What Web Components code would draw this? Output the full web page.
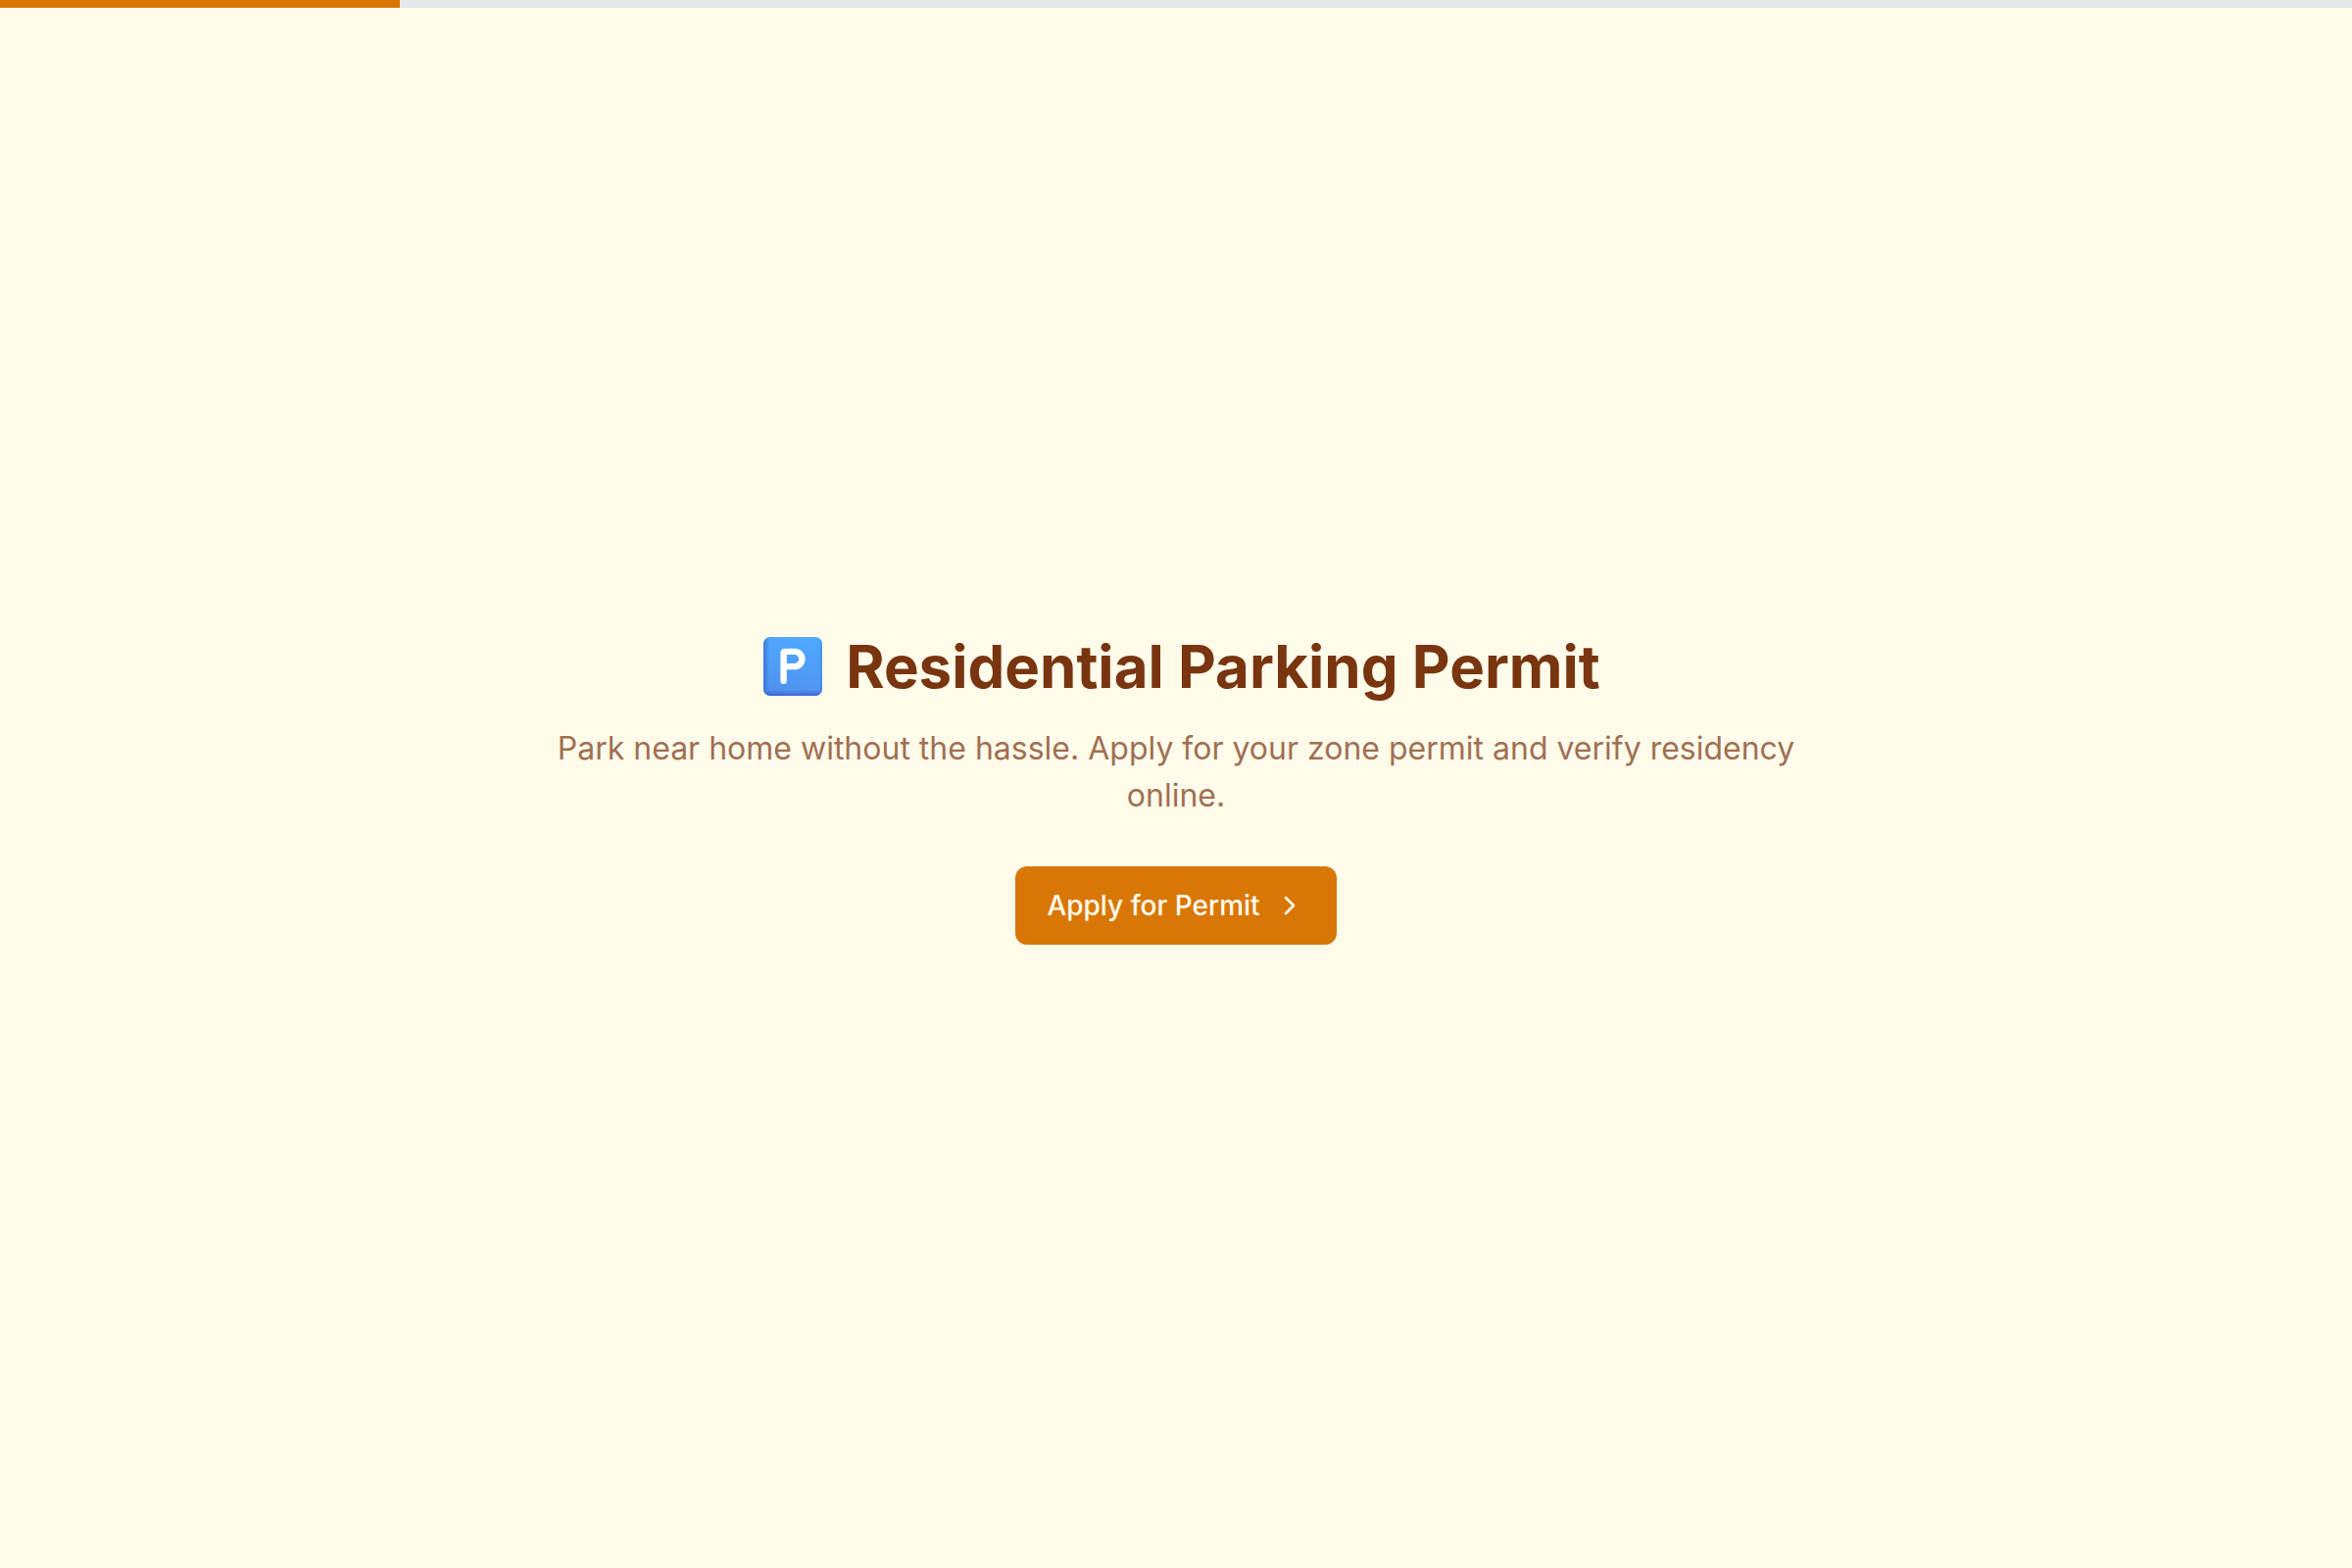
<!DOCTYPE html>
<html lang="en">
<head>
<meta charset="utf-8">
<meta name="viewport" content="width=device-width, initial-scale=1">
<title>Residential Parking Permit</title>
<style>
html, body { height: 100%; margin: 0; }
body { background: #fffbeb; color: #78350f; font-family: Inter, "Liberation Sans", sans-serif; }
</style>
</head>
<body>
<permit-page></permit-page>

<template id="page-template">
<style>
:host { display: flex; flex-direction: column; min-height: 100%; }
main { flex: 1; display: flex; align-items: center; justify-content: center; padding: 32px; }
step-progress { width: 100%; margin-bottom: -8px; }
</style>
<step-progress value="17"></step-progress>
<main>
  <welcome-panel>
    <parking-icon slot="icon"></parking-icon>
    <span slot="title">Residential Parking Permit</span>
    <span slot="description">Park near home without the hassle. Apply for your zone permit and verify residency online.</span>
    <next-button slot="action">Apply for Permit</next-button>
  </welcome-panel>
</main>
</template>

<template id="progress-template">
<style>
:host { display: block; height: 8px; background: #e5e7eb; }
.bar { height: 100%; background: #d97706; }
</style>
<div class="bar"></div>
</template>

<template id="welcome-template">
<style>
:host { display: flex; flex-direction: column; align-items: center; max-width: 1280px; text-align: center; }
h1 { display: flex; align-items: center; gap: 24px; margin: 0 0 16px; padding-left: 12px; font-size: 60px; line-height: 88px; font-weight: 700; }
p { margin: 0 0 48px; font-size: 32px; line-height: 48px; opacity: 0.7; }
</style>
<h1><slot name="icon"></slot><slot name="title"></slot></h1>
<p><slot name="description"></slot></p>
<slot name="action"></slot>
</template>

<template id="parking-template">
<style>
:host { display: block; width: 60px; height: 60px; }
svg { display: block; width: 100%; height: 100%; }
</style>
<svg viewBox="0 0 60 60" role="img" aria-label="Parking">
  <defs>
    <linearGradient id="face" x1="0.6" y1="0" x2="0.45" y2="1">
      <stop offset="0" stop-color="#4fa8ff"/>
      <stop offset="0.5" stop-color="#4f9ef8"/>
      <stop offset="1" stop-color="#5090ee"/>
    </linearGradient>
    <linearGradient id="left">
      <stop offset="0" stop-color="#2f67c8" stop-opacity="0.7"/>
      <stop offset="1" stop-color="#2f67c8" stop-opacity="0"/>
    </linearGradient>
    <linearGradient id="bottom" x1="0" y1="1" x2="0" y2="0">
      <stop offset="0" stop-color="#3a5fd0" stop-opacity="0.85"/>
      <stop offset="1" stop-color="#3a5fd0" stop-opacity="0"/>
    </linearGradient>
    <linearGradient id="right" x1="1" y1="0" x2="0" y2="0">
      <stop offset="0" stop-color="#3a7be0" stop-opacity="0.4"/>
      <stop offset="1" stop-color="#3a7be0" stop-opacity="0"/>
    </linearGradient>
    <clipPath id="tile"><rect width="60" height="60" rx="7"/></clipPath>
  </defs>
  <g clip-path="url(#tile)">
    <rect width="60" height="60" fill="url(#face)"/>
    <rect width="6" height="60" fill="url(#left)"/>
    <rect x="56" width="4" height="60" fill="url(#right)"/>
    <rect y="54" width="60" height="6" fill="url(#bottom)"/>
  </g>
  <path d="M20.6 44.4V16.2Q20.6 14.5 22.3 14.5H31.8A7.6 7.6 0 0 1 31.8 29.7H20.6" transform="translate(0 .4)" fill="none" stroke="#fff" stroke-width="6.4" stroke-linecap="round" stroke-linejoin="round"/>
</svg>
</template>

<template id="button-template">
<style>
:host { display: inline-block; }
button { display: flex; align-items: center; gap: 14px; height: 80px; padding: 0 32px; border: 0; border-radius: 12px; background: #d97706; color: #fffbeb; font: 500 28px/40px Inter, "Liberation Sans", sans-serif; cursor: pointer; }
button:hover { background: #b45309; }
svg { width: 32px; height: 32px; }
</style>
<button type="button"><slot></slot><svg viewBox="0 0 24 24" fill="none" stroke="currentColor" stroke-width="2" stroke-linecap="round" stroke-linejoin="round" aria-hidden="true"><path d="m9 18 6-6-6-6"/></svg></button>
</template>

<script>
class TemplateElement extends HTMLElement {
  constructor() {
    super();
    const template = document.getElementById(this.constructor.template);
    this.attachShadow({ mode: "open" }).append(template.content.cloneNode(true));
  }
}
class ParkingIcon extends TemplateElement { static template = "parking-template"; }
class NextButton extends TemplateElement { static template = "button-template"; }
class WelcomePanel extends TemplateElement { static template = "welcome-template"; }
class StepProgress extends TemplateElement {
  static template = "progress-template";
  connectedCallback() {
    const value = this.getAttribute("value") || "0";
    this.setAttribute("role", "progressbar");
    this.setAttribute("aria-label", "Application progress");
    this.setAttribute("aria-valuenow", value);
    this.shadowRoot.querySelector(".bar").style.width = value + "%";
  }
}
class PermitPage extends TemplateElement { static template = "page-template"; }
customElements.define("parking-icon", ParkingIcon);
customElements.define("next-button", NextButton);
customElements.define("welcome-panel", WelcomePanel);
customElements.define("step-progress", StepProgress);
customElements.define("permit-page", PermitPage);
</script>
</body>
</html>
